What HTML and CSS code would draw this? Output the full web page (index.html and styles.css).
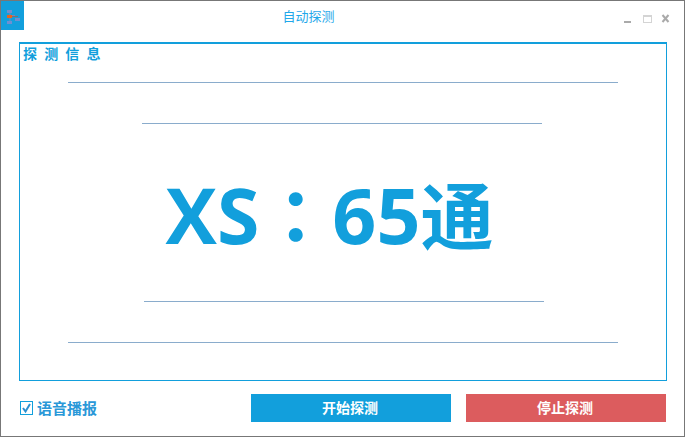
FILE: index.html
```html
<!DOCTYPE html>
<html lang="zh-CN">
<head>
<meta charset="utf-8">
<title>自动探测</title>
<link rel="stylesheet" href="styles.css">
</head>
<body>
<div class="window">
  <header class="titlebar">
    <div class="app-icon">
      <svg width="23" height="29" viewBox="0 0 23 29">
        <path d="M9 14.500H14M9 9V20" stroke="#7a86b8" stroke-width="1" fill="none"/>
        <rect x="6" y="9" width="5" height="3" fill="#6f8fd0"/>
        <rect x="6" y="20" width="5" height="3" fill="#6f8fd0"/>
        <rect x="14" y="17" width="5" height="3" fill="#6f8fd0"/>
        <rect x="6" y="14" width="5" height="3" fill="#e8641f"/>
        <rect x="11" y="15" width="6" height="1" fill="#8a6a6a"/>
      </svg>
    </div>
    <div class="title">自动探测</div>
    <div class="controls">
      <svg width="52" height="14" viewBox="0 0 52 14">
        <rect x="1" y="9" width="7" height="2" fill="#aaa"/>
        <rect x="20.500" y="3.500" width="8" height="7" fill="none" stroke="#d4d4d4"/>
        <rect x="20" y="3" width="9" height="2" fill="#d4d4d4"/>
        <path d="M39.500 3L45.500 10M45.500 3L39.500 10" stroke="#aaa" stroke-width="2" fill="none"/>
      </svg>
    </div>
  </header>
  <main class="panel">
    <h2 class="panel-title">探 测 信 息</h2>
    <div class="rule rule-long rule-a"></div>
    <div class="rule rule-short rule-b"></div>
    <div class="result"><span class="latin">XS</span><span class="colon">：</span><span class="latin">65</span><span class="cjk">通</span></div>
    <div class="rule rule-short rule-c"></div>
    <div class="rule rule-long rule-d"></div>
  </main>
  <footer class="footer">
    <label class="speech">
      <svg class="check" width="13" height="14" viewBox="0 0 13 14">
        <rect x="0.500" y="0.500" width="12" height="13" fill="none" stroke="#12a0dc"/>
        <path d="M3 7L5.500 10.500L10 3" stroke="#2a8fd0" stroke-width="2" fill="none"/>
      </svg>
      <span class="speech-text">语音播报</span>
    </label>
    <button class="btn btn-start">开始探测</button>
    <button class="btn btn-stop">停止探测</button>
  </footer>
</div>
</body>
</html>
```
FILE: styles.css
```css
* { box-sizing: border-box; }
html, body { margin: 0; padding: 0; background: #fff; }
body { font-family: "Noto Sans CJK SC", "Noto Sans", sans-serif; }
.window {
  width: 685px;
  height: 437px;
  border: 1px solid #777;
  background: #fff;
  display: flex;
  flex-direction: column;
  overflow: hidden;
}
.titlebar {
  height: 41px;
  flex: none;
  display: flex;
  align-items: flex-start;
}
.app-icon { width: 23px; height: 29px; background: #129fdc; flex: none; }
.app-icon svg { display: block; }
.title {
  flex: 1;
  text-align: center;
  color: #1fa8ea;
  font-size: 13px;
  line-height: 16px;
  padding-top: 7px;
  padding-right: 25px;
}
.controls { flex: none; width: 66px; padding-top: 11px; padding-left: 5px; }
.controls svg { display: block; }
.panel {
  margin-left: 18px;
  width: 648px;
  height: 339px;
  flex: none;
  border: 1px solid #129fdc;
  border-top-width: 2px;
  display: flex;
  flex-direction: column;
  align-items: flex-start;
}
.panel-title {
  margin: -1px 0 1px 3px;
  height: 20px;
  font-size: 14px;
  line-height: 20px;
  font-weight: 700;
  word-spacing: 4px;
  color: #129fdc;
  flex: none;
}
.rule { height: 1px; background: #8aaccc; flex: none; }
.rule-long { width: 550px; margin-left: 48px; }
.rule-short { width: 400px; }
.rule-a { margin-top: 18px; }
.rule-b { margin-top: 40px; margin-left: 122px; }
.result {
  height: 177px;
  flex: none;
  width: 100%;
  display: flex;
  align-items: baseline;
  justify-content: center;
  line-height: 176px;
  font-size: 73px;
  font-weight: 700;
  color: #129fdc;
  white-space: nowrap;
  padding-right: 27px;
}
.latin { font-family: "Open Sans", sans-serif; font-size: 77px; }
.colon { font-family: "Noto Sans CJK TC", sans-serif; }
.cjk { font-family: "Noto Sans CJK SC", sans-serif; }
.rule-c { margin-left: 124px; }
.rule-d { margin-top: 40px; }
.footer {
  flex: 1;
  display: flex;
  align-items: flex-start;
  padding: 13px 0 0 19px;
}
.speech {
  width: 231px;
  flex: none;
  display: flex;
  align-items: center;
  height: 28px;
  gap: 4px;
  color: #2a98d8;
  font-size: 15px;
  font-weight: 700;
}
.speech-text { padding-bottom: 2px; }
.check { display: block; flex: none; }
.btn {
  width: 200px;
  height: 28px;
  border: 0;
  padding: 0 2px 2px 0;
  color: #fff;
  font-family: inherit;
  font-size: 14px;
  font-weight: 700;
}
.btn-start { background: #129fdc; }
.btn-stop { background: #dc5c5e; margin-left: 15px; }
```
